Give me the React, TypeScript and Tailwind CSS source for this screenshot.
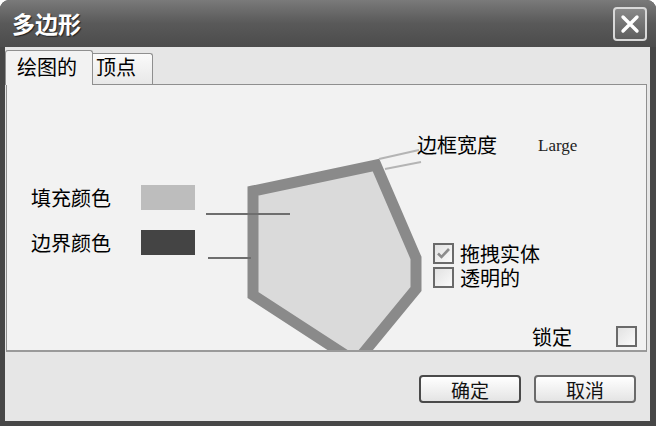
import React from "react";

const cjk = { fontFamily: '"Noto Sans CJK SC", "Noto Sans", sans-serif' };

function Check({ checked }: { checked?: boolean }) {
  return (
    <span className="w-[21px] h-[21px] shrink-0 border-[2px] border-[#6a6a6a] bg-gradient-to-br from-[#e2e2e2] to-[#fafafa] flex items-center justify-center">
      {checked && (
        <svg width="15" height="13" viewBox="0 0 15 13">
          <path d="M2 6.5 L5.5 10 L13 2" fill="none" stroke="#8c8c8c" strokeWidth="2.6" />
        </svg>
      )}
    </span>
  );
}

function Btn({ label, focus }: { label: string; focus?: boolean }) {
  return (
    <button
      className={
        "w-[102px] h-[28px] rounded-[4px] border-[2px] bg-gradient-to-b from-[#ffffff] to-[#e4e4e4] text-[19px] leading-none text-[#111] flex items-center justify-center " +
        (focus ? "border-[#4a4a4a]" : "border-[#6a6a6a]")
      }
    >
      {label}
    </button>
  );
}

export default function App() {
  return (
    <div className="w-[656px] h-[426px] bg-white" style={cjk}>
      <div className="w-full h-full rounded-t-[9px] bg-[#474747] flex flex-col overflow-hidden">
        {/* title bar */}
        <div className="h-[47px] shrink-0 flex items-center pl-[12px] pr-[9px] bg-gradient-to-b from-[#7a7a7a] via-[#595959] to-[#4c4c4c]">
          <span className="text-white font-bold text-[23px] leading-none [text-shadow:1px_1px_1px_#222] flex-1">
            多边形
          </span>
          <div className="w-[34px] h-[34px] rounded-[4px] border-[2px] border-[#d8d8d8] bg-gradient-to-b from-[#8a8a8a] to-[#5e5e5e] flex items-center justify-center">
            <svg width="20" height="20" viewBox="0 0 20 20">
              <path d="M3 3 L17 17 M17 3 L3 17" stroke="#fff" strokeWidth="3.4" strokeLinecap="round" />
            </svg>
          </div>
        </div>

        {/* body */}
        <div className="flex-1 ml-[5px] mr-[6px] mb-[5px] bg-[#e6e6e6] flex flex-col">
          {/* tabs */}
          <div className="h-[37px] flex items-end">
            <div className="w-[88px] h-[35px] -mb-px relative z-10 bg-[#f2f2f2] border border-b-0 border-[#8f8f8f] rounded-t-[3px] pl-[11px] pt-[4px] text-[20px] leading-[24px] text-black">
              绘图的
            </div>
            <div className="w-[60px] h-[31px] bg-gradient-to-b from-[#fafafa] to-[#e8e8e8] border border-l-0 border-b-0 border-[#8f8f8f] rounded-tr-[3px] pl-[3px] pt-[1px] text-[20px] leading-[24px] text-black">
              顶点
            </div>
          </div>

          {/* panel */}
          <div className="relative ml-[1px] mr-[3px] h-[268px] bg-[#f2f2f2] border border-[#8f8f8f] border-b-[2px] border-b-[#9a9a9a] overflow-hidden flex">
            <svg className="absolute left-0 top-0" width="641" height="268" viewBox="0 0 641 268">
              <polygon
                points="246,106 369,80 409,173 409,204 349,277 246,210"
                fill="#dadada"
                stroke="#8a8a8a"
                strokeWidth="11"
                strokeLinejoin="miter"
              />
              <line x1="199" y1="129" x2="283" y2="129" stroke="#6e6e6e" strokeWidth="2" />
              <line x1="201" y1="173" x2="244" y2="173" stroke="#6e6e6e" strokeWidth="2" />
              <line x1="372" y1="74" x2="412" y2="65" stroke="#b4b4b4" strokeWidth="2" />
              <line x1="378" y1="84" x2="414" y2="77" stroke="#b4b4b4" strokeWidth="2" />
            </svg>

            {/* left column */}
            <div className="relative w-[410px] shrink-0 pl-[24px] pt-[100px] flex flex-col gap-[20px]">
              <div className="flex items-center h-[25px]">
                <span className="w-[110px] text-[20px] leading-none text-black">填充颜色</span>
                <span className="w-[54px] h-[25px] bg-[#bdbdbd]" />
              </div>
              <div className="flex items-center h-[25px]">
                <span className="w-[110px] text-[20px] leading-none text-black">边界颜色</span>
                <span className="w-[54px] h-[25px] bg-[#444444]" />
              </div>
            </div>

            {/* right column */}
            <div className="relative flex-1 flex flex-col">
              <div className="flex items-end pt-[49px]">
                <span className="text-[20px] leading-[22px] text-black">边框宽度</span>
                <span className="ml-[41px] text-[17px] leading-[20px] text-[#222]" style={{ fontFamily: '"Liberation Serif", serif' }}>
                  Large
                </span>
              </div>
              <div className="mt-[87px] ml-[16px] flex flex-col gap-[3px]">
                <label className="h-[21px] flex items-center gap-[6px] text-[20px] leading-[21px] text-black">
                  <Check checked />
                  拖拽实体
                </label>
                <label className="h-[21px] flex items-center gap-[6px] text-[20px] leading-[21px] text-black">
                  <Check />
                  透明的
                </label>
              </div>
              <div className="mt-auto mb-[3px] flex items-center justify-end pr-[9px]">
                <span className="text-[20px] leading-none text-black">锁定</span>
                <span className="ml-[44px]">
                  <Check />
                </span>
              </div>
            </div>
          </div>

          {/* footer */}
          <div className="flex-1 flex justify-end items-start pt-[23px] pr-[14px] gap-[13px]">
            <Btn label="确定" focus />
            <Btn label="取消" />
          </div>
        </div>
      </div>
    </div>
  );
}
